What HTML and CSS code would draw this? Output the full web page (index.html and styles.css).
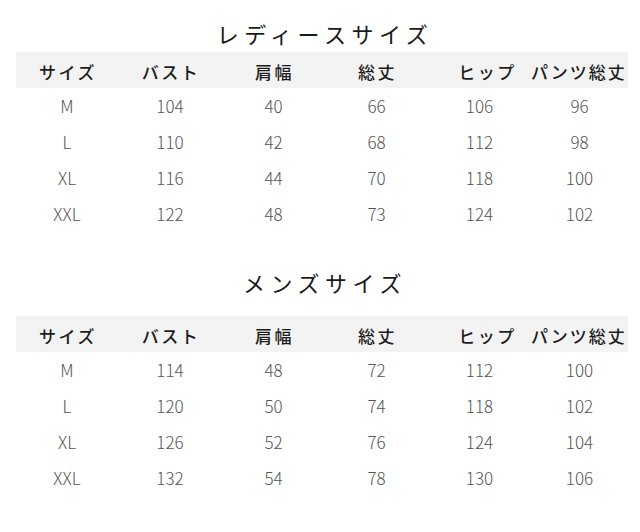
FILE: index.html
```html
<!DOCTYPE html>
<html lang="ja">
<head>
<meta charset="utf-8">
<link rel="stylesheet" href="styles.css">
</head>
<body>
<div class="page">
  <section class="size-block size-block--ladies">
    <h2 class="title">レディースサイズ</h2>
    <div class="grid head">
      <div class="cell">サイズ</div>
      <div class="cell">バスト</div>
      <div class="cell">肩幅</div>
      <div class="cell">総丈</div>
      <div class="cell shift-r">ヒップ</div>
      <div class="cell shift-l">パンツ総丈</div>
    </div>
    <div class="grid row"><div class="cell">M</div><div class="cell">104</div><div class="cell">40</div><div class="cell">66</div><div class="cell">106</div><div class="cell">96</div></div>
    <div class="grid row"><div class="cell">L</div><div class="cell">110</div><div class="cell">42</div><div class="cell">68</div><div class="cell">112</div><div class="cell">98</div></div>
    <div class="grid row"><div class="cell">XL</div><div class="cell">116</div><div class="cell">44</div><div class="cell">70</div><div class="cell">118</div><div class="cell">100</div></div>
    <div class="grid row"><div class="cell">XXL</div><div class="cell">122</div><div class="cell">48</div><div class="cell">73</div><div class="cell">124</div><div class="cell">102</div></div>
  </section>
  <section class="size-block size-block--mens">
    <h2 class="title">メンズサイズ</h2>
    <div class="grid head">
      <div class="cell">サイズ</div>
      <div class="cell">バスト</div>
      <div class="cell">肩幅</div>
      <div class="cell">総丈</div>
      <div class="cell shift-r">ヒップ</div>
      <div class="cell shift-l">パンツ総丈</div>
    </div>
    <div class="grid row"><div class="cell">M</div><div class="cell">114</div><div class="cell">48</div><div class="cell">72</div><div class="cell">112</div><div class="cell">100</div></div>
    <div class="grid row"><div class="cell">L</div><div class="cell">120</div><div class="cell">50</div><div class="cell">74</div><div class="cell">118</div><div class="cell">102</div></div>
    <div class="grid row"><div class="cell">XL</div><div class="cell">126</div><div class="cell">52</div><div class="cell">76</div><div class="cell">124</div><div class="cell">104</div></div>
    <div class="grid row"><div class="cell">XXL</div><div class="cell">132</div><div class="cell">54</div><div class="cell">78</div><div class="cell">130</div><div class="cell">106</div></div>
  </section>
</div>
</body>
</html>
```
FILE: styles.css
```css
html, body {
  margin: 0;
  padding: 0;
  background: #ffffff;
}
body {
  font-family: "Noto Sans CJK JP", "Noto Sans", sans-serif;
  color: #222;
}
.page {
  width: 640px;
  height: 532px;
  padding: 0 12px 0 16px;
  box-sizing: border-box;
}
.title {
  margin: 0;
  font-size: 22px;
  font-weight: 400;
  line-height: 30px;
  letter-spacing: 5.5px;
  text-align: center;
  color: #1a1a1a;
  padding-left: 6px;
}
.size-block--ladies {
  padding-top: 18px;
}
.size-block--ladies .title {
  margin-bottom: 4px;
}
.size-block--mens {
  padding-top: 35px;
}
.size-block--mens .title {
  margin-bottom: 19px;
}
.grid {
  display: grid;
  grid-template-columns: 102px 104px 103px 103px 103px 97px;
}
.cell {
  text-align: center;
  white-space: nowrap;
}
.head {
  background: #f3f3f3;
  height: 36px;
  box-sizing: border-box;
  padding-top: 4px;
  font-size: 17px;
  font-weight: 500;
  line-height: 32px;
  letter-spacing: 2.5px;
  color: #1c1c1c;
}
.head .cell {
  padding-left: 2px;
}
.head .shift-r {
  padding-left: 16px;
}
.head .shift-l {
  padding-right: 10px;
  padding-left: 0;
  letter-spacing: 2px;
}
.row {
  height: 36px;
  font-size: 17px;
  font-weight: 200;
  line-height: 36px;
  color: #555;
}
```
